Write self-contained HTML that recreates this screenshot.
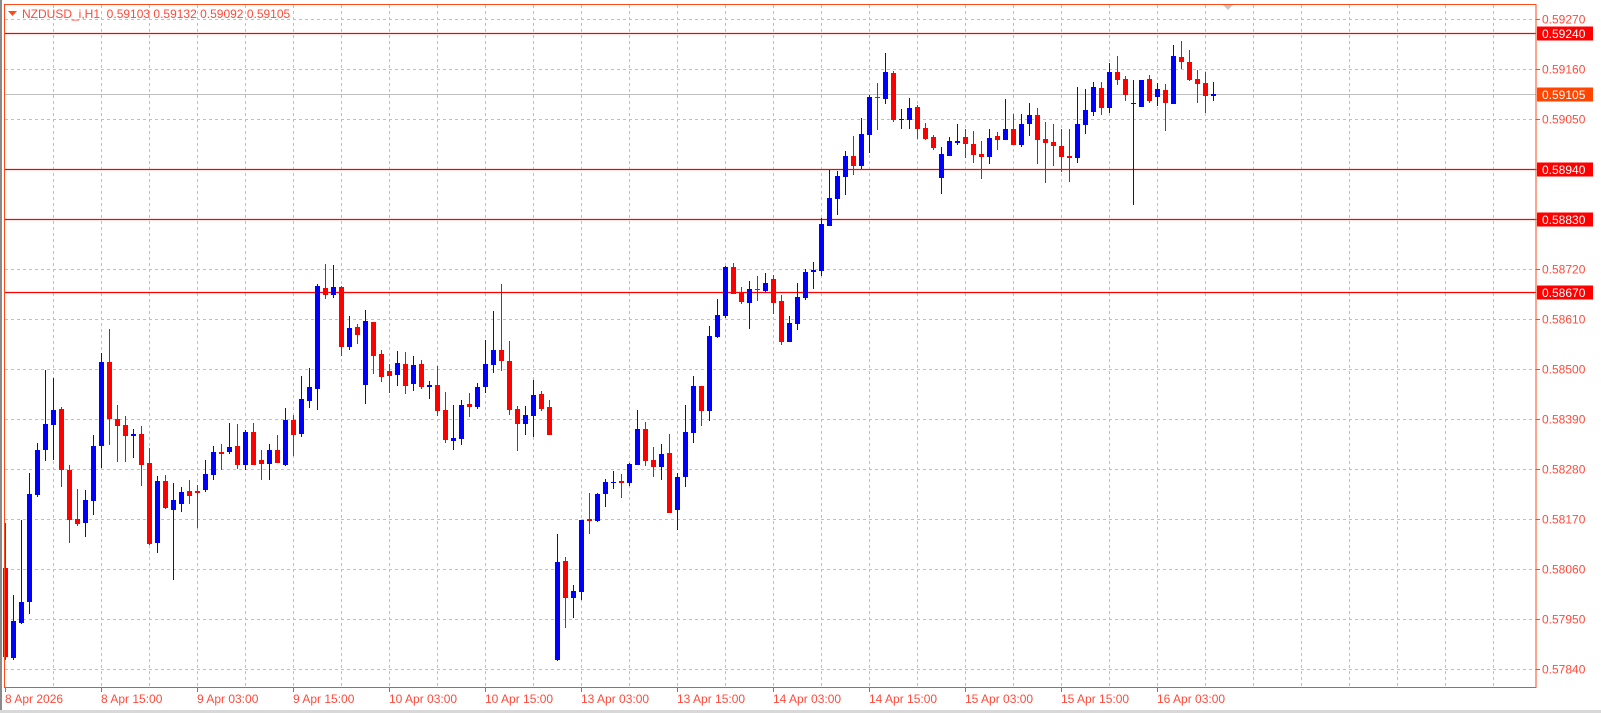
<!DOCTYPE html>
<html><head><meta charset="utf-8"><style>
html,body{margin:0;padding:0;background:#fff;width:1601px;height:713px;overflow:hidden}
svg{display:block;font-family:"Liberation Sans",Arial,sans-serif}
</style></head><body>
<svg id="s" width="1601" height="713" viewBox="0 0 1601 713" xmlns="http://www.w3.org/2000/svg">
<rect x="0" y="0" width="1601" height="713" fill="#fff"/>
<rect x="0" y="0" width="2" height="713" fill="#8a8a8a"/>
<rect x="0" y="710" width="1601" height="3" fill="#d8d8d8"/>
<g id="grid" stroke="#c0c0c0" stroke-width="1" stroke-dasharray="3,3"></g>
<line x1="5" y1="94.5" x2="1536" y2="94.5" stroke="#c0c0c0"/>
<g stroke="#ff0000" stroke-width="1.2">
<line x1="5" y1="33.5" x2="1536" y2="33.5"/>
<line x1="5" y1="169.5" x2="1536" y2="169.5"/>
<line x1="5" y1="219.5" x2="1536" y2="219.5"/>
<line x1="5" y1="292.5" x2="1536" y2="292.5"/>
</g>
<g id="candles"></g>
<rect x="4.5" y="4.5" width="1531.5" height="683" fill="none" stroke="#ff4a1a" stroke-width="1"/>
<polygon points="8,11 17,11 12.5,16" fill="#ff4a1a"/>
<text x="22" y="18" font-size="12" fill="#ff4a3a">NZDUSD_i,H1&#160;&#160;0.59103&#160;0.59132&#160;0.59092&#160;0.59105</text>
<polygon points="1223,5 1233,5 1228,10" fill="#c8c8c8"/>
<g id="plab" font-size="12"></g>
<g id="tlab" font-size="12" fill="#ff4a3a"></g>
</svg>
<script>
var NS="http://www.w3.org/2000/svg";
function el(p,n,a,t){var e=document.createElementNS(NS,n);for(var k in a)e.setAttribute(k,a[k]);if(t!=null)e.textContent=t;p.appendChild(e);return e;}
var g=document.getElementById('grid');
for(var y=19.5;y<=670;y+=50)el(g,'line',{x1:5,y1:y,x2:1536,y2:y});
for(var x=53.5;x<1536;x+=48)el(g,'line',{x1:x,y1:5,x2:x,y2:687});
var pl=document.getElementById('plab');
var prices=["0.59270","0.59160","0.59050","0.58940","0.58830","0.58720","0.58610","0.58500","0.58390","0.58280","0.58170","0.58060","0.57950","0.57840"];
for(var i=0;i<prices.length;i++){var yy=19+50*i;
 el(pl,'line',{x1:1536,y1:yy+0.5,x2:1540,y2:yy+0.5,stroke:'#ff4a1a'});
 if(i==3||i==4)continue;
 el(pl,'text',{x:1542,y:yy+4.5,fill:'#ff4a3a'},prices[i]);}
function box(yc,txt,col){el(pl,'rect',{x:1537,y:yc-7,width:56,height:14,fill:col});el(pl,'text',{x:1542,y:yc+4.5,fill:'#fff'},txt);}
box(33.5,"0.59240","#ff0000");box(169.5,"0.58940","#ff0000");box(219.5,"0.58830","#ff0000");box(292.5,"0.58670","#ff0000");box(94.5,"0.59105","#ff4500");
var tl=document.getElementById('tlab');
var tls=["8 Apr 2026","8 Apr 15:00","9 Apr 03:00","9 Apr 15:00","10 Apr 03:00","10 Apr 15:00","13 Apr 03:00","13 Apr 15:00","14 Apr 03:00","14 Apr 15:00","15 Apr 03:00","15 Apr 15:00","16 Apr 03:00"];
for(var i=0;i<tls.length;i++){var xx=5+96*i;
 el(tl,'line',{x1:xx+0.5,y1:687,x2:xx+0.5,y2:692,stroke:'#ff4a1a'});
 el(tl,'text',{x:xx,y:703},tls[i]);}
var d=[
[568,657,523,660,'r'],[621,658,595,660,'b'],[602,623,520,624,'b'],[494,602,473,614,'b'],[450,495,443,497,'b'],[424,450,370,461,'b'],[410,425,378,460,'b'],[409,470,407,487,'r'],[470,520,465,543,'r'],[519,524,489,526,'r'],
[500,523,490,537,'b'],[446,501,435,515,'b'],[362,446,353,468,'b'],[362,419,329,445,'r'],[419,426,405,462,'r'],[425,436,416,462,'r'],[434,436,429,458,'b'],[434,465,426,486,'r'],[463,544,448,545,'r'],[481,543,476,553,'b'],
[481,508,475,509,'r'],[500,510,483,580,'b'],[492,504,487,512,'b'],[491,496,480,504,'r'],[491,493,485,528,'r'],[474,490,460,492,'b'],[452,475,446,480,'b'],[452,454,444,470,'r'],[447,452,423,454,'b'],[446,465,424,469,'r'],
[432,465,430,470,'b'],[432,465,423,465,'r'],[460,464,450,480,'r'],[450,464,444,480,'b'],[450,463,435,463,'r'],[420,465,408,466,'b'],[420,435,415,456,'r'],[399,434,376,437,'b'],[387,401,368,408,'b'],[286,389,284,410,'b'],
[288,295,264,299,'r'],[287,295,265,298,'b'],[287,347,286,356,'r'],[328,347,316,350,'b'],[327,335,324,344,'r'],[321,385,310,404,'b'],[322,356,322,374,'r'],[354,377,350,382,'r'],[371,376,364,393,'r'],[363,375,351,386,'b'],
[364,386,352,394,'r'],[365,384,356,391,'b'],[364,387,360,389,'r'],[385,387,381,399,'b'],[385,411,366,416,'r'],[410,440,392,443,'r'],[438,441,405,450,'b'],[405,439,400,445,'b'],[404,407,393,417,'r'],[387,407,383,409,'b'],
[364,387,340,393,'b'],[350,365,311,373,'b'],[350,361,284,371,'r'],[361,410,341,415,'r'],[409,424,406,451,'r'],[415,424,406,435,'b'],[395,416,380,437,'b'],[394,409,391,411,'r'],[407,435,400,435,'r'],[562,660,534,661,'b'],
[561,598,557,628,'r'],[591,598,585,618,'b'],[520,592,520,600,'b'],[519,521,493,534,'r'],[494,521,493,522,'b'],[482,494,479,507,'b'],[482,483,471,489,'b'],[481,483,474,498,'r'],[464,483,463,486,'b'],[429,465,410,465,'b'],
[429,461,422,466,'r'],[460,467,447,477,'r'],[454,467,444,480,'b'],[453,513,434,513,'r'],[477,510,473,530,'b'],[432,477,405,487,'b'],[386,433,376,443,'b'],[386,411,386,426,'r'],[336,411,326,421,'b'],[315,337,299,338,'b'],
[267,316,266,318,'b'],[267,294,263,294,'r'],[292,302,287,304,'r'],[289,303,281,329,'b'],[289,290,276,301,'r'],[283,291,273,292,'b'],[279,303,275,314,'r'],[301,342,295,345,'r'],[323,342,316,342,'b'],[297,324,283,330,'b'],
[272,298,269,300,'b'],[270,272,262,289,'b'],[224,271,218,276,'b'],[198,226,170,226,'b'],[176,199,171,215,'b'],[156,177,151,195,'b'],[156,166,136,175,'r'],[134,166,118,169,'b'],[97,135,95,153,'b'],[97,98,83,130,'r'],
[72,99,53,104,'b'],[73,120,71,122,'r'],[119,120,109,129,'b'],[108,120,98,129,'b'],[107,129,105,139,'r'],[128,139,123,140,'r'],[137,148,135,150,'r'],[154,178,147,194,'b'],[141,156,137,156,'b'],[141,143,124,145,'b'],
[137,144,129,158,'r'],[144,155,131,163,'r'],[154,157,141,179,'r'],[138,157,129,164,'b'],[136,140,132,150,'r'],[129,140,99,140,'b'],[129,145,114,145,'r'],[124,145,114,147,'b'],[115,124,103,136,'b'],[115,140,108,164,'r'],
[139,143,122,183,'r'],[142,146,124,166,'r'],[146,157,129,172,'r'],[156,158,129,182,'r'],[124,158,87,163,'b'],[110,125,89,134,'b'],[87,112,82,116,'b'],[88,108,82,115,'r'],[72,108,63,113,'b'],[72,80,56,85,'r'],
[79,95,76,101,'r'],[103,104,80,205,'b'],[80,107,80,107,'b'],[79,101,75,103,'r'],[89,97,83,106,'b'],[90,103,84,131,'r'],[56,104,45,104,'b'],[57,62,41,69,'r'],[62,80,50,81,'r'],[79,84,70,103,'r'],
[83,96,72,113,'r'],[94,96,82,101,'b']];
var cg=document.getElementById('candles');
for(var i=0;i<d.length;i++){var c=d[i],col=c[4]=='r'?'#ff0000':'#0000ff',x0=3+8*i;
 var hi=Math.min(c[2],c[0]),lo=Math.max(c[3],c[1]);
 el(cg,'rect',{x:x0+2,y:hi,width:1,height:Math.max(1,lo-hi),fill:col});
 el(cg,'rect',{x:x0,y:c[0],width:5,height:Math.max(1,c[1]-c[0]),fill:col});}
</script>
</body></html>
